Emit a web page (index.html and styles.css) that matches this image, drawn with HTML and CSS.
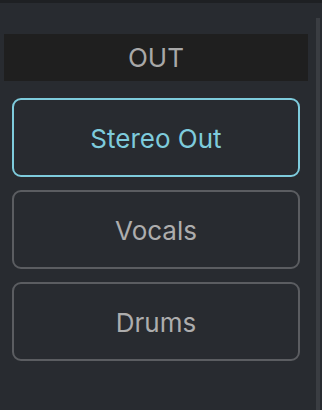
FILE: index.html
```html
<!DOCTYPE html>
<html lang="en">

<head>
  <meta charset="UTF-8" />
  <meta name="viewport" content="width=device-width, initial-scale=1.0" />
  <title>Outputs</title>
  <link rel="stylesheet" href="styles.css">
</head>

<body>
  <div class="topbar"></div>
  <div class="main">
    <div class="panel">
      <!-- Section title -->
      <div class="panel-title">OUT</div>

      <!-- Output buttons -->
      <div class="outputs">
        <button class="out-btn active">Stereo Out</button>
        <button class="out-btn">Vocals</button>
        <button class="out-btn">Drums</button>
      </div>
    </div>
    <div class="scrollbar"></div>
  </div>
</body>

</html>
```

FILE: styles.css
```css
html,
body {
  height: 100%;
}

body {
  margin: 0;
  padding: 0;
  font-family: "Inter", "Liberation Sans", sans-serif;
  background-color: #282b30;
  display: flex;
  flex-direction: column;
  overflow: hidden;
}

.topbar {
  height: 3px;
  background-color: #1e2023;
}

.main {
  flex: 1;
  display: flex;
}

.panel {
  width: 304px;
  margin-left: 4px;
  padding-top: 31px;
}

.panel-title {
  height: 47px;
  display: flex;
  align-items: center;
  justify-content: center;
  background-color: #1f1f1f;
  color: #a8a8a8;
  font-size: 26px;
}

.outputs {
  display: flex;
  flex-direction: column;
  gap: 13px;
  padding: 17px 8px 0 8px;
}

.out-btn {
  height: 79px;
  font-family: inherit;
  font-size: 26px;
  color: #adadad;
  background-color: transparent;
  border: 2px solid #5b5d61;
  border-radius: 9px;
  padding-top: 2px;
  cursor: pointer;
}

.out-btn.active {
  color: #7ecbdc;
  border-color: #7ecbdc;
}

.scrollbar {
  width: 4px;
  margin: 15px 2px 0 8px;
  background-color: #3a3d42;
}
```
